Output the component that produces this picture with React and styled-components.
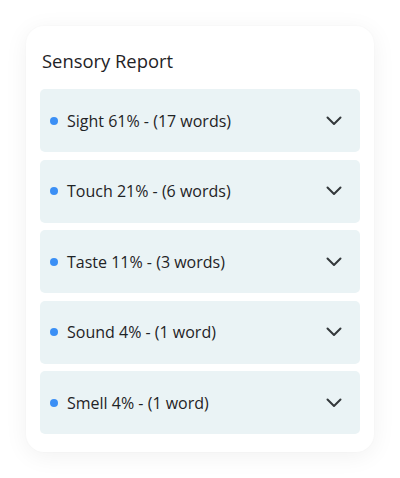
import styled, { createGlobalStyle } from 'styled-components';

const GlobalStyle = createGlobalStyle`
  html, body {
    margin: 0;
    padding: 0;
    background: #ffffff;
  }
  body {
    font-family: "Open Sans", "Noto Sans", sans-serif;
    color: #1f2326;
  }
`;

const senses = [
  { name: 'Sight', pct: 61, words: 17 },
  { name: 'Touch', pct: 21, words: 6 },
  { name: 'Taste', pct: 11, words: 3 },
  { name: 'Sound', pct: 4, words: 1 },
  { name: 'Smell', pct: 4, words: 1 },
];

function Chevron() {
  return (
    <svg width="16" height="10" viewBox="0 0 16 10" fill="none">
      <path d="M1.5 1.5 L8 8 L14.5 1.5" stroke="#34383b" strokeWidth="2" strokeLinecap="round" strokeLinejoin="round" />
    </svg>
  );
}

export default function App() {
  return (
    <Page>
      <GlobalStyle />
      <Card>
        <Title>Sensory Report</Title>
        <List>
          {senses.map((s) => (
            <Row key={s.name}>
              <Dot />
              <Label>
                {s.name} {s.pct}% - ({s.words} {s.words === 1 ? 'word' : 'words'})
              </Label>
              <Toggle>
                <Chevron />
              </Toggle>
            </Row>
          ))}
        </List>
      </Card>
    </Page>
  );
}

const Page = styled.div`
  width: 400px;
  height: 478px;
  padding: 26px 0 0 26px;
  box-sizing: border-box;
`;

const Card = styled.div`
  width: 348px;
  height: 426px;
  box-sizing: border-box;
  background: #ffffff;
  border-radius: 18px;
  box-shadow: 0 4px 24px rgba(0, 0, 0, 0.06), 0 0 2px rgba(0, 0, 0, 0.03);
  padding: 23px 14px 0 14px;
`;

const Title = styled.h2`
  margin: 0 0 16px 2px;
  font-size: 18.4px;
  font-weight: 400;
  color: #1f2326;
  line-height: 24px;
`;

const List = styled.div`
  display: flex;
  flex-direction: column;
  gap: 7.5px;
`;

const Row = styled.div`
  height: 63px;
  background: #eaf3f5;
  border-radius: 5px;
  display: flex;
  align-items: center;
  padding: 0 18px 0 10px;
`;

const Dot = styled.span`
  width: 8px;
  height: 8px;
  border-radius: 50%;
  background: #3b8ff5;
  flex-shrink: 0;
`;

const Label = styled.span`
  margin-left: 9px;
  font-size: 16px;
  color: #1f2326;
  flex: 1;
`;

const Toggle = styled.span`
  display: flex;
  align-items: center;
`;
